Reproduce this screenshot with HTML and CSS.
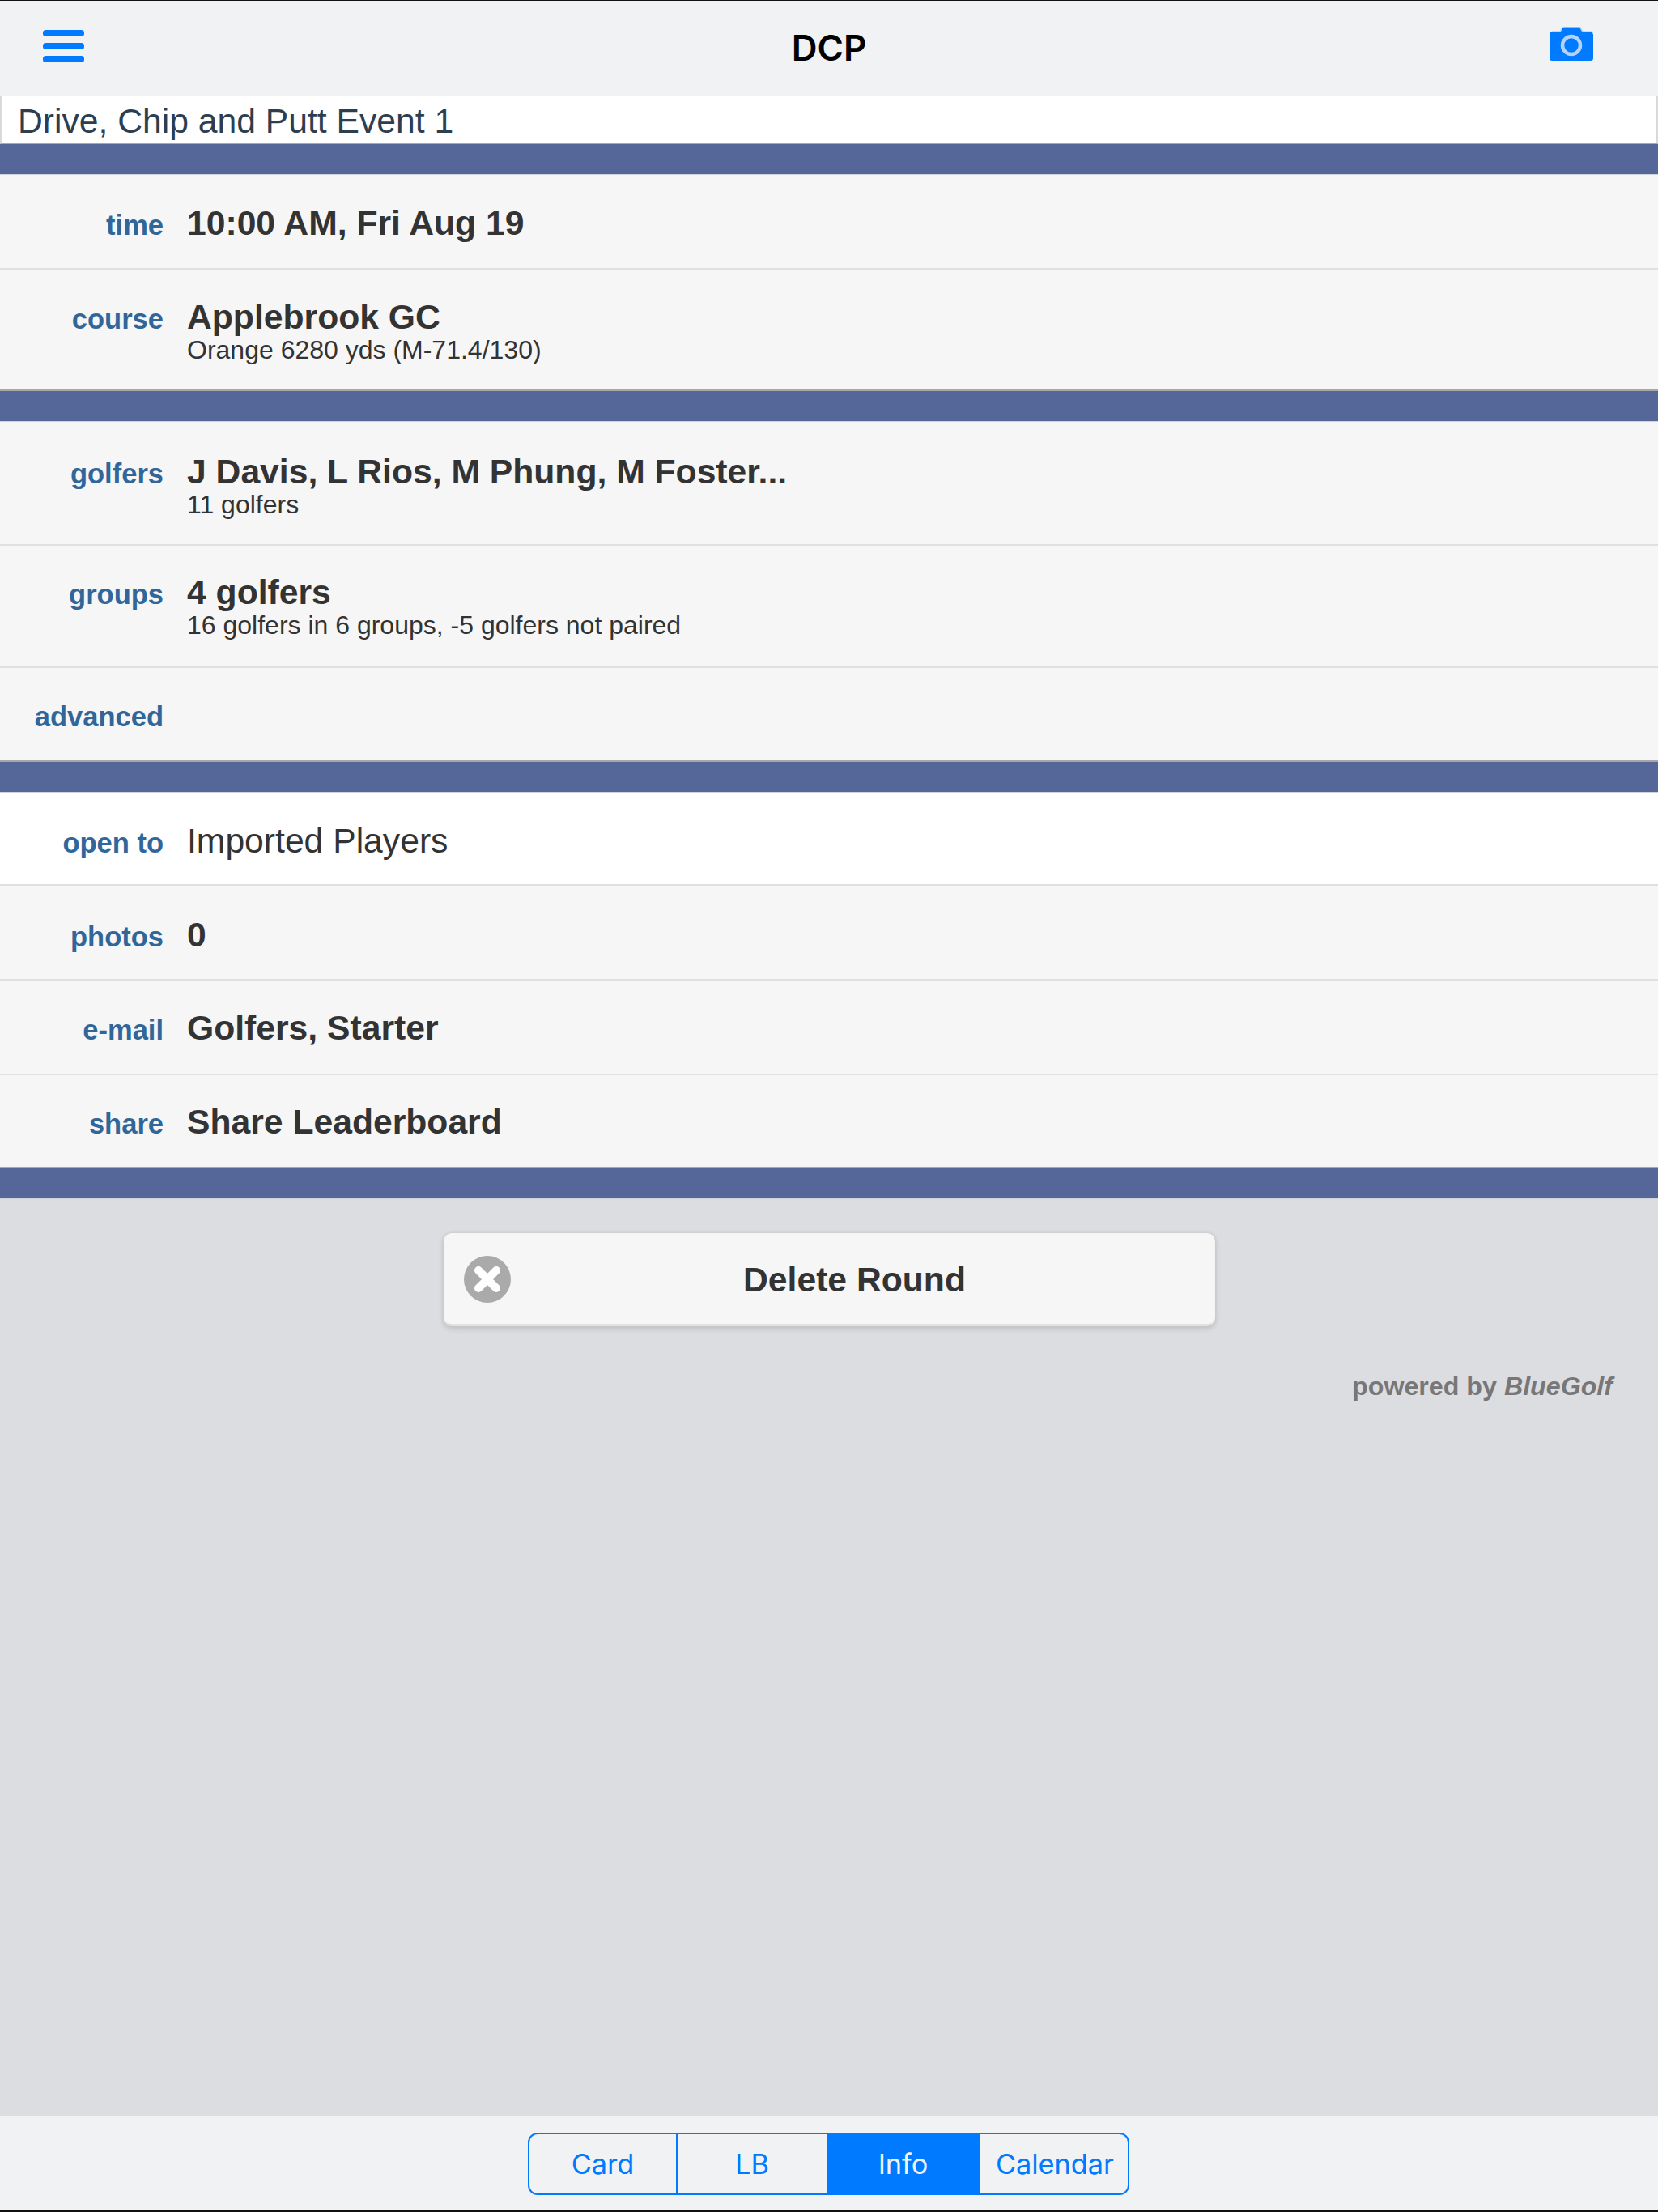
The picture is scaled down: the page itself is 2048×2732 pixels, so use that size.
FILE: index.html
```html
<!DOCTYPE html>
<html lang="en">
<head>
<meta charset="utf-8">
<title>DCP</title>
<link rel="stylesheet" href="styles.css">
</head>
<body>
<div class="app">
  <header class="topbar">
    <button class="icon-btn menu-btn" aria-label="Menu">
      <svg width="51" height="40" viewBox="0 0 51 40"><rect x="0" y="0" width="51" height="8" rx="3.5"/><rect x="0" y="16" width="51" height="8" rx="3.5"/><rect x="0" y="32" width="51" height="8" rx="3.5"/></svg>
    </button>
    <h1 class="title">DCP</h1>
    <button class="icon-btn cam-btn" aria-label="Camera">
      <svg width="54" height="42" viewBox="0 0 54 42"><path d="M3 6h9c1 0 1.600-.5 2.200-1.700L15.500 1.600C16 .6 16.800 0 18 0h18c1.200 0 2 .6 2.500 1.600l1.300 2.700C40.400 5.500 41 6 42 6h9c1.800 0 3 1.200 3 3v30c0 1.800-1.200 3-3 3H3c-1.800 0-3-1.200-3-3V9c0-1.800 1.200-3 3-3z" fill="#007aff"/><path d="M3 6h9c1 0 1.600-.5 2.200-1.700L15.500 1.600C16 .6 16.800 0 18 0h18c1.200 0 2 .6 2.500 1.600l1.300 2.700C40.400 5.500 41 6 42 6h9c1.800 0 3 1.200 3 3" fill="none" stroke="#b3d3f8" stroke-width="1.500"/><circle cx="27" cy="23" r="11" fill="none" stroke="#b3d3f8" stroke-width="4.500"/></svg>
    </button>
  </header>
  <div class="name-field">Drive, Chip and Putt Event 1</div>
  <div class="bar"></div>
  <section class="group">
    <div class="row r-time"><div class="label">time</div><div class="value"><div class="main">10:00 AM, Fri Aug 19</div></div></div>
    <div class="row r-course"><div class="label">course</div><div class="value"><div class="main">Applebrook GC</div><div class="sub">Orange 6280 yds (M-71.4/130)</div></div></div>
  </section>
  <div class="bar"></div>
  <section class="group">
    <div class="row r-golfers"><div class="label">golfers</div><div class="value"><div class="main">J Davis, L Rios, M Phung, M Foster...</div><div class="sub">11 golfers</div></div></div>
    <div class="row r-groups"><div class="label">groups</div><div class="value"><div class="main">4 golfers</div><div class="sub">16 golfers in 6 groups, -5 golfers not paired</div></div></div>
    <div class="row r-advanced"><div class="label">advanced</div><div class="value"><div class="main">&nbsp;</div></div></div>
  </section>
  <div class="bar"></div>
  <section class="group">
    <div class="row r-open"><div class="label">open to</div><div class="value"><div class="main plain">Imported Players</div></div></div>
    <div class="row r-photos"><div class="label">photos</div><div class="value"><div class="main">0</div></div></div>
    <div class="row r-email"><div class="label">e-mail</div><div class="value"><div class="main">Golfers, Starter</div></div></div>
    <div class="row r-share"><div class="label">share</div><div class="value"><div class="main">Share Leaderboard</div></div></div>
  </section>
  <div class="bar"></div>
  <main class="canvas">
    <button class="delete-btn">
      <svg class="delete-icon" width="58" height="58" viewBox="0 0 58 58"><circle cx="29" cy="29" r="29" fill="#aaa"/><path d="M18 18L40 40M40 18L18 40" stroke="#fff" stroke-width="10" stroke-linecap="round"/></svg>
      <span>Delete Round</span>
    </button>
    <p class="powered">powered by <em>BlueGolf</em></p>
  </main>
  <nav class="tabbar">
    <div class="tabs">
      <a class="tab tab-card">Card</a>
      <a class="tab tab-lb">LB</a>
      <a class="tab tab-info active">Info</a>
      <a class="tab tab-cal">Calendar</a>
    </div>
  </nav>
</div>
</body>
</html>
```
FILE: styles.css
```css
* { box-sizing: border-box; }
html, body { margin: 0; padding: 0; }
body { font-family: "Liberation Sans", Arial, sans-serif; background: #dcdde1; color: #333; }
.app { width: 2048px; height: 2732px; display: flex; flex-direction: column; overflow: hidden; }

.topbar { height: 119px; flex: none; display: flex; align-items: flex-start; justify-content: space-between; background: #f1f2f4; border-top: 1px solid #111; border-bottom: 1px solid #a8a8a8; padding: 0 80px 0 53px; }
.icon-btn { border: 0; background: none; padding: 0; display: block; line-height: 0; }
.menu-btn { margin-top: 36px; fill: #007aff; }
.cam-btn { margin-top: 32px; }
.title { margin: 0; position: absolute; left: 0; right: 0; width: 2048px; top: 1px; height: 117px; line-height: 117px; text-align: center; font-family: Inter, "Liberation Sans", sans-serif; font-size: 44px; font-weight: 600; color: #000; pointer-events: none; }

.name-field { height: 59px; flex: none; background: #fff; border-left: 3px solid #d9d9d9; border-right: 3px solid #d9d9d9; border-bottom: 2px solid #a8a8a8; padding-left: 19px; font-size: 42.670px; line-height: 61px; color: #2c3e50; white-space: nowrap; }

.bar { height: 38px; flex: none; background: #556799; border-bottom: 1px solid #cfd2da; }

.group { flex: none; }
.row { display: flex; align-items: baseline; gap: 29px; background: #f6f6f6; border-bottom: 2px solid #e0e0e0; padding-top: 34px; }
.row:last-child { border-bottom-color: #a8a8a8; }
.r-time { height: 117px; }
.r-course { height: 150px; padding-top: 33px; }
.r-golfers { height: 153px; padding-top: 36px; }
.r-groups { height: 151px; padding-top: 32px; }
.r-advanced { height: 116px; padding-top: 32px; }
.r-open { height: 115px; background: #fff; padding-top: 34px; }
.r-photos { height: 117px; padding-top: 35px; }
.r-email { height: 117px; padding-top: 33px; }
.r-share { height: 115px; padding-top: 32px; }
.label { width: 202px; flex: none; text-align: right; font-size: 34.500px; font-weight: 700; color: #306699; white-space: nowrap; }
.value { min-width: 0; }
.main { font-size: 42.670px; font-weight: 700; line-height: 50px; color: #333; white-space: nowrap; }
.main.plain { font-weight: 400; }
.sub { font-size: 32px; line-height: 32px; color: #333; white-space: nowrap; }

.canvas { flex: 1; min-height: 0; display: flex; flex-direction: column; padding-top: 42px; }
.delete-btn { position: relative; align-self: flex-start; margin-left: 548px; width: 953px; height: 115px; background: #f6f6f6; border: 0; border-bottom: 3px solid #e2e2e2; border-radius: 10px; box-shadow: 0 0 4px #c4c5c9, 0 3px 7px rgba(0,0,0,.14); font-family: "Liberation Sans", Arial, sans-serif; font-size: 42.670px; font-weight: 700; color: #333; padding: 2px 0 0 62px; }
.delete-icon { position: absolute; left: 25px; top: 28px; }
.powered { margin: 54px 56px 0 0; text-align: right; font-size: 32.200px; font-weight: 700; line-height: 40px; color: #777; }
.powered em { font-style: italic; }

.tabbar { height: 119px; flex: none; background: #f1f2f4; border-top: 1px solid #a8a8a8; border-bottom: 2px solid #111; padding: 20px 0 0 652px; display: flex; align-items: flex-start; }
.tabs { width: 743px; height: 77px; display: flex; border: 2px solid #007aff; border-radius: 12px; overflow: hidden; font-family: Inter, "Liberation Sans", sans-serif; font-size: 34.300px; color: #007aff; }
.tab { display: flex; align-items: center; justify-content: center; height: 100%; }
.tab-card { width: 183px; border-right: 2px solid #007aff; }
.tab-lb { width: 184px; }
.tab-info { width: 189px; }
.tab-cal { flex: 1; padding-left: 3px; }
.active { background: #007aff; color: #f1f2f4; }
```
